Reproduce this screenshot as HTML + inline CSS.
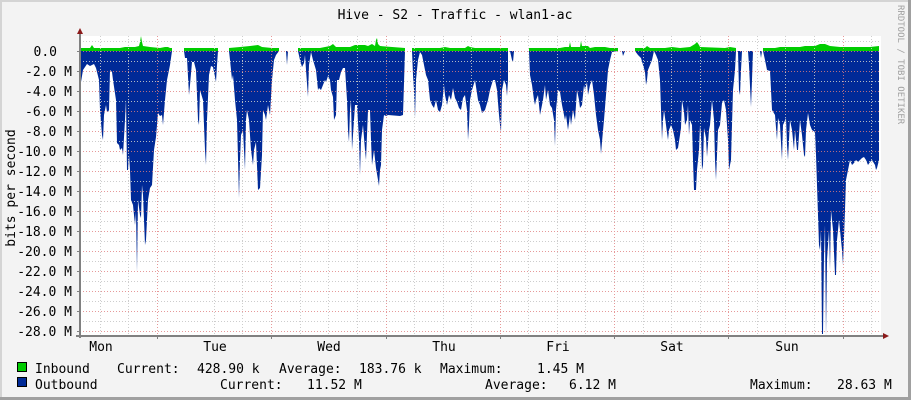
<!DOCTYPE html>
<html><head><meta charset="utf-8"><style>
html,body{margin:0;padding:0;background:#f3f3f3}
svg{display:block}
text{font-family:"DejaVu Sans Mono","Liberation Mono",monospace;fill:#000}
</style></head><body>
<svg width="911" height="400" viewBox="0 0 911 400" xmlns="http://www.w3.org/2000/svg">
<rect x="0" y="0" width="911" height="400" fill="#f3f3f3"/>
<rect x="0" y="0" width="911" height="2" fill="#d4d4d4"/>
<rect x="0" y="0" width="2" height="400" fill="#d4d4d4"/>
<rect x="908" y="0" width="3" height="400" fill="#a0a0a0"/>
<rect x="0" y="397" width="911" height="3" fill="#a0a0a0"/>
<rect x="80" y="36" width="801" height="300" fill="#fff"/>

<g fill="#002a97">
<polygon points="81,51 81,82 83,70 87,64 90,66 94,64 96,68 97,72 99,80 100,110 102,135 103,140 104,115 106,105 107,112 108,112 109,110 110,70 112,72 113,80 116,100 117,143 119,145 120,150 122,148 123,155 125,120 126,100 127,170 128,170 129,155 130,170 131,200 133,205 135,225 136,212 137,272 138,200 140,215 141,218 142,185 143,195 145,245 146,240 148,200 150,188 152,185 154,150 156,137 158,113 160,116 162,115 163,125 165,100 167,80 168,75 170,65 172,51"/>
<polygon points="184,51 185,58 187,58 189,95 190,85 192,62 194,62 196,70 198,120 199,125 200,90 203,100 205,150 206,165 207,120 209,75 211,66 213,67 216,82 217,65 218,51"/>
<polygon points="229,51 230,60 232,80 233,75 235,100 237,120 239,198 240,160 241,135 243,130 244,150 245,170 246,120 247,110 249,120 251,150 253,165 254,150 256,142 258,190 260,188 262,155 263,110 265,115 266,120 268,105 270,115 272,80 274,60 276,55 279,51"/>
<polygon points="286,51 287,65 288,51"/>
<polygon points="298,51 300,60 302,67 304,63 305,55 306,70 308,97 309,65 311,52 313,60 316,70 318,90 319,88 321,90 323,85 325,80 326,82 328,76 330,80 331,90 333,97 334,120 336,115 337,80 339,80 341,72 343,68 345,68 347,100 348,130 349,142 350,110 351,100 352,150 353,135 355,105 357,105 359,140 360,175 361,140 363,125 365,150 366,160 368,110 370,110 371,140 372,165 374,150 376,168 378,180 379,186 380,170 381,165 382,130 384,115 386,116 388,115 400,116 403,115 405,51"/>
<polygon points="412,51 413,75 414,90 415,118 416,80 418,60 420,52 422,55 425,70 426,75 428,80 430,100 432,105 434,108 436,100 438,110 440,112 442,105 444,85 445,95 447,105 449,95 451,100 453,88 455,98 457,102 459,108 461,110 463,98 465,95 467,110 468,140 469,125 470,100 472,90 475,80 478,100 480,105 482,113 485,110 488,100 490,90 493,80 495,80 497,90 499,115 500,125 501,132 502,90 504,80 506,85 507,96 508,80 508,51"/>
<polygon points="510,51 512,60 513,62 514,51"/>
<polygon points="529,51 530,75 532,85 534,100 535,105 536,100 538,95 540,115 541,110 543,100 545,85 546,100 548,90 550,105 552,108 554,120 555,146 556,110 558,90 560,92 562,105 563,110 565,120 566,115 568,130 570,115 571,125 573,110 575,120 577,90 579,100 580,108 582,105 584,85 585,90 587,82 588,95 590,85 592,80 594,95 596,115 598,130 600,140 601,154 602,142 604,120 606,95 608,70 610,60 612,52 618,51"/>
<polygon points="622,51 623,56 625,51"/>
<polygon points="635,51 638,55 641,58 643,65 645,72 646,85 647,80 648,70 650,65 652,60 654,51 656,55 658,60 660,80 661,110 662,140 663,120 664,110 666,125 668,140 669,130 671,125 673,130 675,140 676,150 678,148 680,135 681,128 682,100 684,112 685,125 687,120 688,105 689,135 690,120 692,125 693,160 694,190 696,190 697,170 699,150 700,125 701,135 702,170 703,165 704,128 706,138 707,157 709,130 710,125 712,100 714,120 715,160 716,180 718,130 720,125 722,103 724,100 726,110 728,140 729,170 731,160 733,90 735,70 736,51"/>
<polygon points="738,51 739,90 740,95 741,70 742,51"/>
<polygon points="748,51 749,65 751,107 752,80 753,51"/>
<polygon points="760,51 761,58 762,51"/>
<polygon points="763,51 765,60 767,70 770,71 771,90 772,110 775,115 777,140 778,118 780,125 782,160 783,125 786,118 787,145 788,160 790,120 792,130 794,150 795,130 797,150 798,150 800,120 802,135 804,155 805,157 806,130 808,113 810,125 812,130 815,132 816,155 818,215 819,245 820,250 821,230 822,334 823,334 824,255 825,225 826,336 827,260 829,230 830,270 831,210 833,230 835,275 836,275 837,240 839,220 840,230 842,250 843,265 845,210 846,180 848,170 850,160 852,165 854,163 856,160 858,162 860,160 862,158 864,157 866,160 868,165 870,162 872,160 875,165 876,170 877,168 879,160 879,51"/>
</g>
<g fill="#00cc00">
<polygon points="81,51 81,48 90,48 92,45 94,48 120,48 125,47 135,47 139,46 140,42 141,36 142,42 143,46 150,47 160,48 165,47 168,47 170,48 172,48 172,51"/>
<polygon points="184,51 184,48 218,48 218,51"/>
<polygon points="229,51 229,48 240,47 250,46 258,45 262,47 272,48 279,48 279,51"/>
<polygon points="298,51 298,48 320,48 330,46 333,44 336,47 350,47 355,45 362,45 365,45 368,46 372,44 375,46 376,40 377,38 378,44 380,46 405,48 405,51"/>
<polygon points="412,51 412,48 420,48 440,48 445,47 450,48 465,48 468,46 470,47 475,48 490,48 508,48 508,51"/>
<polygon points="529,51 529,48 545,48 560,48 565,47 569,47 570,42 571,47 575,47 580,47 581,41 582,46 588,46 590,48 595,47 605,47 610,48 618,48 618,51"/>
<polygon points="635,51 635,48 645,48 647,46 650,48 665,48 672,47 680,48 690,47 695,44 697,42 699,45 700,47 725,48 730,47 736,48 736,51"/>
<polygon points="763,51 763,48 775,48 780,47 800,47 805,46 815,46 820,44 825,44 830,46 840,47 850,47 860,47 870,47 879,46 879,51"/>
</g>

<g stroke="#c8c8c8" stroke-width="1" stroke-dasharray="1,2" opacity="0.9">
<path d="M100.5 36V336M128.5 36V336M214.5 36V336M242.5 36V336M300.5 36V336M328.5 36V336M357.5 36V336M414.5 36V336M443.5 36V336M471.5 36V336M528.5 36V336M557.5 36V336M585.5 36V336M643.5 36V336M671.5 36V336M700.5 36V336M757.5 36V336M785.5 36V336M814.5 36V336M871.5 36V336"/>
<path d="M80 41.5H881M80 61.5H881M80 81.5H881M80 101.5H881M80 121.5H881M80 141.5H881M80 161.5H881M80 181.5H881M80 201.5H881M80 221.5H881M80 241.5H881M80 261.5H881M80 281.5H881M80 301.5H881M80 321.5H881"/>
</g>
<g stroke="#e08080" stroke-width="1" stroke-dasharray="1,2" opacity="0.8">
<path d="M157.5 36V336M271.5 36V336M386.5 36V336M500.5 36V336M614.5 36V336M728.5 36V336M843.5 36V336"/>
<path d="M80 51.5H881M80 71.5H881M80 91.5H881M80 111.5H881M80 131.5H881M80 151.5H881M80 171.5H881M80 191.5H881M80 211.5H881M80 231.5H881M80 251.5H881M80 271.5H881M80 291.5H881M80 311.5H881M80 331.5H881"/>
</g>
<g stroke="#808080" stroke-width="1">
<path d="M77 51.5H80M77 71.5H80M77 91.5H80M77 111.5H80M77 131.5H80M77 151.5H80M77 171.5H80M77 191.5H80M77 211.5H80M77 231.5H80M77 251.5H80M77 271.5H80M77 291.5H80M77 311.5H80M77 331.5H80"/>
<path d="M157.5 336V339M271.5 336V339M386.5 336V339M500.5 336V339M614.5 336V339M728.5 336V339M843.5 336V339"/>
</g>
<g stroke="#808080" stroke-width="2">
<line x1="80" y1="32" x2="80" y2="338"/>
<line x1="76" y1="336" x2="884" y2="336"/>
</g>
<polygon points="77,34 83,34 80,28" fill="#8b1a1a"/>
<polygon points="883,333 883,339 889,336" fill="#8b1a1a"/>

<text x="455" y="19" font-size="13" text-anchor="middle">Hive - S2 - Traffic - wlan1-ac</text>
<g font-size="13" text-anchor="end">
<text x="57" y="56">0.0</text>
<text x="72" y="76">-2.0 M</text>
<text x="72" y="96">-4.0 M</text>
<text x="72" y="116">-6.0 M</text>
<text x="72" y="136">-8.0 M</text>
<text x="72" y="156">-10.0 M</text>
<text x="72" y="176">-12.0 M</text>
<text x="72" y="196">-14.0 M</text>
<text x="72" y="216">-16.0 M</text>
<text x="72" y="236">-18.0 M</text>
<text x="72" y="256">-20.0 M</text>
<text x="72" y="276">-22.0 M</text>
<text x="72" y="296">-24.0 M</text>
<text x="72" y="316">-26.0 M</text>
<text x="72" y="336">-28.0 M</text>
</g>
<text transform="translate(15,188) rotate(-90)" font-size="13" text-anchor="middle">bits per second</text>
<g font-size="13" text-anchor="middle">
<text x="101" y="351">Mon</text>
<text x="215" y="351">Tue</text>
<text x="329" y="351">Wed</text>
<text x="444" y="351">Thu</text>
<text x="558" y="351">Fri</text>
<text x="672" y="351">Sat</text>
<text x="787" y="351">Sun</text>
</g>
<text transform="translate(898,5) rotate(90)" font-size="9" style="fill:#a0a0a0">RRDTOOL / TOBI OETIKER</text>

<rect x="17.5" y="362.5" width="9" height="9" fill="#00cc00" stroke="#000"/>
<rect x="17.5" y="377.5" width="9" height="9" fill="#002a97" stroke="#000"/>
<g font-size="13">
<text x="35" y="373">Inbound</text>
<text x="117" y="373">Current:</text>
<text x="197" y="373">428.90 k</text>
<text x="279" y="373">Average:</text>
<text x="359" y="373">183.76 k</text>
<text x="440" y="373">Maximum:</text>
<text x="537" y="373">1.45 M</text>
<text x="35" y="389">Outbound</text>
<text x="220" y="389">Current:</text>
<text x="307" y="389">11.52 M</text>
<text x="485" y="389">Average:</text>
<text x="569" y="389">6.12 M</text>
<text x="750" y="389">Maximum:</text>
<text x="837" y="389">28.63 M</text>
</g>
</svg>
</body></html>
